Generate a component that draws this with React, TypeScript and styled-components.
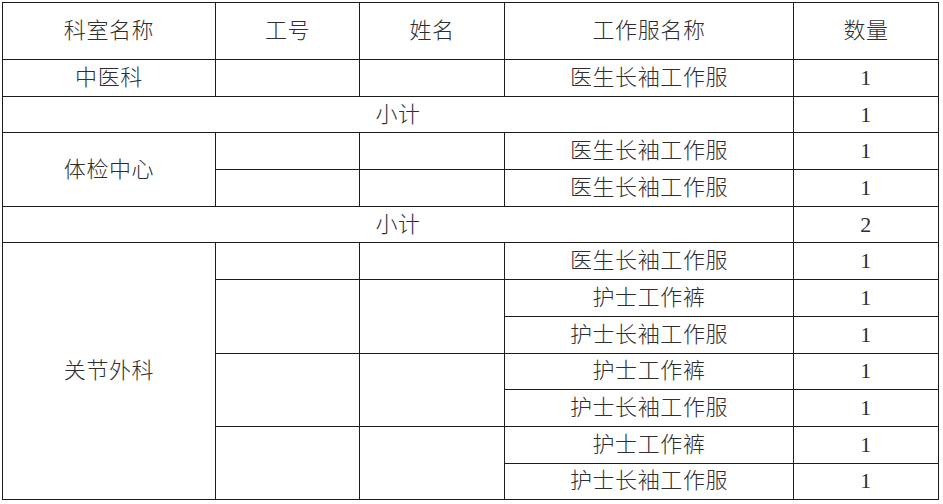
import React from "react";
import styled, { createGlobalStyle } from "styled-components";

const GlobalStyle = createGlobalStyle`
  html, body {
    margin: 0;
    padding: 0;
    background: #ffffff;
  }
  body {
    font-family: "Liberation Serif", "Noto Sans CJK SC", serif;
  }
`;

const Page = styled.div`
  padding: 2px 0 0 2px;
`;

const Table = styled.table`
  width: 936px;
  table-layout: fixed;
  border-collapse: collapse;
  color: #2e2e2e;
  font-size: 22px;
  font-weight: 300;
  font-family: "Liberation Serif", "Noto Sans CJK SC", serif;
`;

const HeadRow = styled.tr`
  height: 57px;
`;

const Row = styled.tr`
  height: 36.7px;
`;

const Cell = styled.td`
  border: 1px solid #1c1c1c;
  padding: 0;
  text-align: center;
  vertical-align: middle;
  line-height: 1;
  white-space: nowrap;
  letter-spacing: 0.6px;
`;

const columns = [213, 144, 145, 289, 145];
const headers = ["科室名称", "工号", "姓名", "工作服名称", "数量"];

type Item = { name: string; qty: number; person?: number };

type Dept = {
  name: string;
  items: Item[];
  total: number;
};

// person: how many rows the 工号 / 姓名 cell spans, starting at this row
const depts: Dept[] = [
  {
    name: "中医科",
    items: [{ name: "医生长袖工作服", qty: 1, person: 1 }],
    total: 1,
  },
  {
    name: "体检中心",
    items: [
      { name: "医生长袖工作服", qty: 1, person: 1 },
      { name: "医生长袖工作服", qty: 1, person: 1 },
    ],
    total: 2,
  },
  {
    name: "关节外科",
    items: [
      { name: "医生长袖工作服", qty: 1, person: 1 },
      { name: "护士工作裤", qty: 1, person: 2 },
      { name: "护士长袖工作服", qty: 1 },
      { name: "护士工作裤", qty: 1, person: 2 },
      { name: "护士长袖工作服", qty: 1 },
      { name: "护士工作裤", qty: 1, person: 2 },
      { name: "护士长袖工作服", qty: 1 },
    ],
    total: 0,
  },
];

export default function App() {
  return (
    <>
      <GlobalStyle />
      <Page>
        <Table>
          <colgroup>
            {columns.map((w, i) => (
              <col key={i} style={{ width: w }} />
            ))}
          </colgroup>
          <tbody>
            <HeadRow>
              {headers.map((h) => (
                <Cell key={h}>{h}</Cell>
              ))}
            </HeadRow>
            {depts.map((d, di) => (
              <React.Fragment key={di}>
                {d.items.map((it, ii) => (
                  <Row key={ii}>
                    {ii === 0 && (
                      <Cell rowSpan={d.items.length}>{d.name}</Cell>
                    )}
                    {it.person && (
                      <>
                        <Cell rowSpan={it.person} />
                        <Cell rowSpan={it.person} />
                      </>
                    )}
                    <Cell>{it.name}</Cell>
                    <Cell>{it.qty}</Cell>
                  </Row>
                ))}
                {d.total > 0 && (
                  <Row>
                    <Cell colSpan={4}>小计</Cell>
                    <Cell>{d.total}</Cell>
                  </Row>
                )}
              </React.Fragment>
            ))}
          </tbody>
        </Table>
      </Page>
    </>
  );
}
